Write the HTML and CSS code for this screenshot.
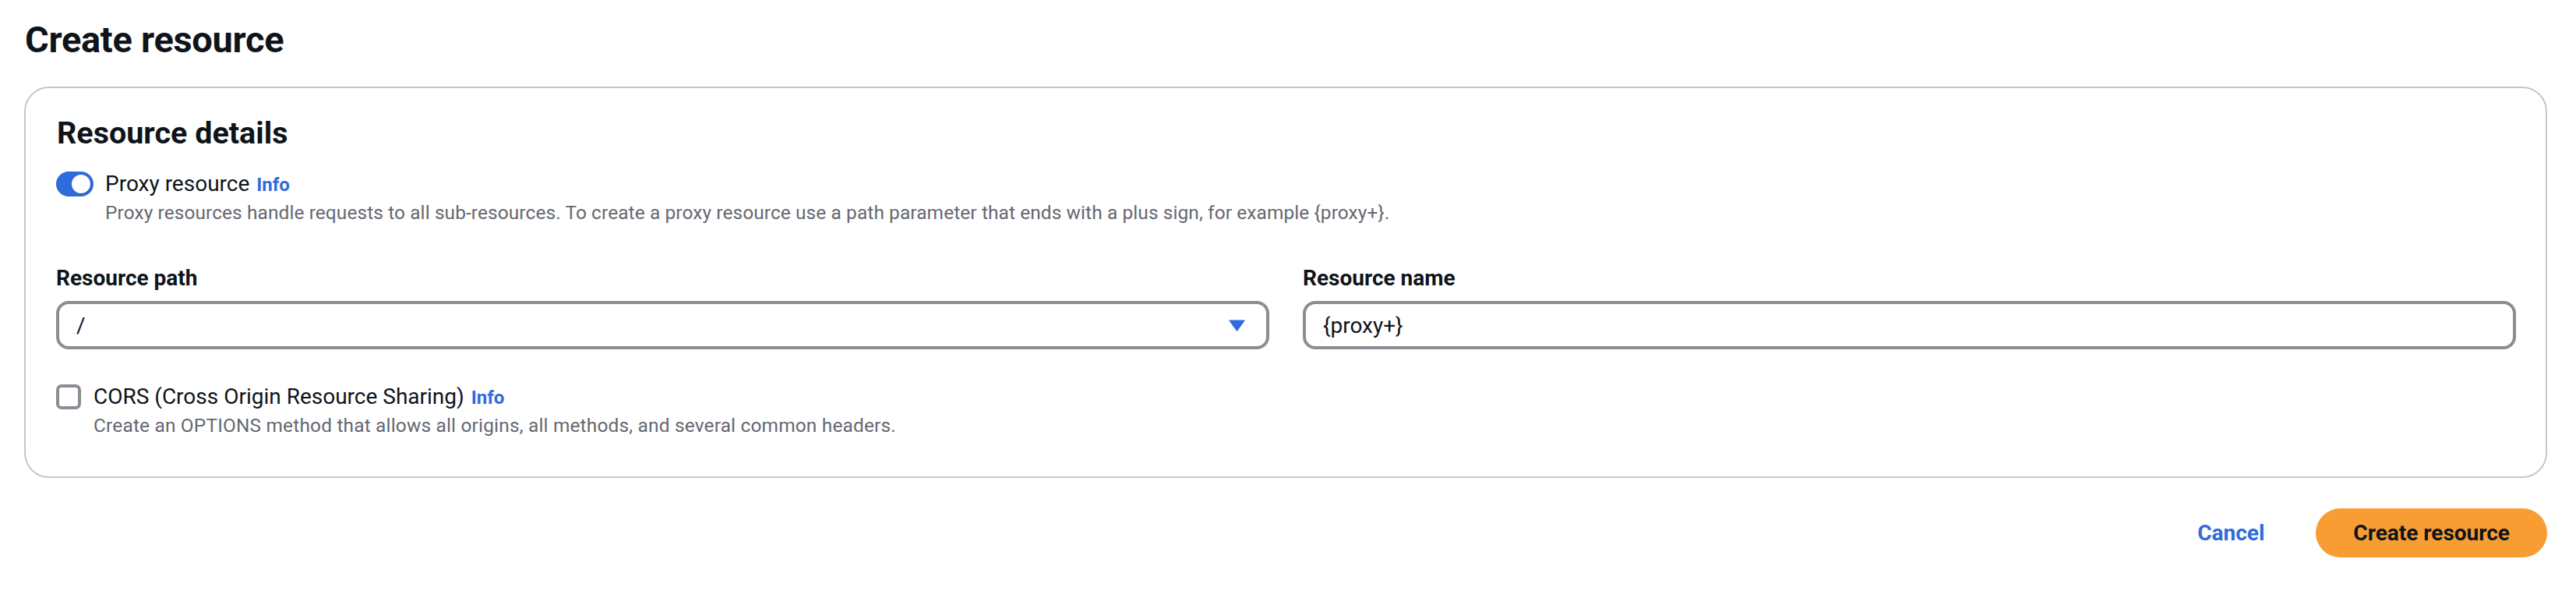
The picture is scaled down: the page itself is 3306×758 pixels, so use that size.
FILE: index.html
```html
<!DOCTYPE html>
<html lang="en">
<head>
<meta charset="utf-8">
<title>Create resource</title>
<link rel="stylesheet" href="styles.css">
</head>
<body>
<main class="page">
  <h1 class="page-title">Create resource</h1>

  <section class="card">
    <h2 class="card-title">Resource details</h2>

    <div class="option">
      <div class="option-row">
        <span class="toggle"><span class="toggle-knob"></span></span>
        <span class="option-label">Proxy resource <a class="info" href="#">Info</a></span>
      </div>
      <p class="option-desc toggle-desc">Proxy resources handle requests to all sub-resources. To create a proxy resource use a path parameter that ends with a plus sign, for example {proxy+}.</p>
    </div>

    <div class="fields">
      <div class="field">
        <label class="field-label">Resource path</label>
        <div class="input select">
          <span class="input-value">/</span>
          <svg class="caret" width="21" height="15" viewBox="0 0 21 15"><path d="M1 0.5 H20 Q21 0.5 20.4 1.6 L11.4 14 Q10.5 15 9.6 14 L0.6 1.6 Q0 0.5 1 0.5 Z" fill="#2f6bdb"/></svg>
        </div>
      </div>
      <div class="field">
        <label class="field-label">Resource name</label>
        <div class="input">
          <span class="input-value">{proxy+}</span>
        </div>
      </div>
    </div>

    <div class="option cors">
      <div class="option-row">
        <span class="checkbox"></span>
        <span class="option-label">CORS (Cross Origin Resource Sharing) <a class="info" href="#">Info</a></span>
      </div>
      <p class="option-desc check-desc">Create an OPTIONS method that allows all origins, all methods, and several common headers.</p>
    </div>
  </section>

  <div class="actions">
    <a class="btn-link" href="#">Cancel</a>
    <button class="btn-primary" type="button">Create resource</button>
  </div>
</main>
</body>
</html>
```

FILE: styles.css
```css
* { box-sizing: border-box; }

html, body {
  margin: 0;
  padding: 0;
  background: #ffffff;
}

body {
  font-family: Roboto, "Liberation Sans", Arial, sans-serif;
  color: #0f141a;
}

.page {
  padding: 23px 37px 0 31px;
}

.page-title {
  margin: 0 0 32px 1px;
  font-size: 47px;
  line-height: 56px;
  font-weight: 700;
  letter-spacing: -0.3px;
}

.card {
  border: 2px solid #c6c6cd;
  border-radius: 32px;
  padding: 34px 38px 51px 39px;
}

.card-title {
  margin: 0 0 25px 1px;
  font-size: 39.5px;
  line-height: 48px;
  font-weight: 700;
}

.option-row {
  display: flex;
  align-items: flex-start;
}

.toggle {
  position: relative;
  width: 48px;
  height: 32px;
  border-radius: 16px;
  background: #2f6bdb;
  flex: none;
  margin-right: 15px;
}

.toggle-knob {
  position: absolute;
  top: 4px;
  right: 4px;
  width: 24px;
  height: 24px;
  border-radius: 50%;
  background: #ffffff;
  box-shadow: 1px 1px 1px rgba(10, 40, 120, 0.35);
}

.checkbox {
  width: 32px;
  height: 32px;
  border: 4px solid #8c8c94;
  border-radius: 7px;
  background: #fff;
  flex: none;
  margin-right: 16px;
}

.option-label {
  font-size: 28px;
  line-height: 32px;
  color: #0f141a;
}

.info {
  font-size: 24px;
  font-weight: 700;
  color: #2f6bdb;
  text-decoration: none;
  margin-left: 2px;
}

.option-desc {
  margin: 6px 0 0;
  font-size: 24.4px;
  line-height: 28px;
  letter-spacing: 0.12px;
  color: #656871;
}

.toggle-desc { padding-left: 63px; }
.check-desc { padding-left: 48px; letter-spacing: 0.2px; }

.fields {
  display: grid;
  grid-template-columns: 1fr 1fr;
  column-gap: 43px;
  margin-top: 54px;
}

.field-label {
  display: block;
  font-size: 28px;
  line-height: 32px;
  font-weight: 700;
  margin-bottom: 13px;
}

.input {
  display: flex;
  align-items: center;
  height: 62px;
  border: 4px solid #8c8c94;
  border-radius: 16px;
  padding: 0 27px 0 22px;
  background: #fff;
}

.input-value {
  flex: 1;
  font-size: 28px;
  color: #0f141a;
}

.caret { flex: none; }

.cors { margin-top: 45px; }

.actions {
  display: flex;
  justify-content: flex-end;
  align-items: center;
  margin-top: 39px;
}

.btn-link {
  font-size: 28px;
  font-weight: 700;
  color: #2f6bdb;
  text-decoration: none;
  margin-right: 66px;
}

.btn-primary {
  height: 63px;
  padding: 0 48px;
  border: none;
  border-radius: 32px;
  background: #f89d33;
  color: #0f141a;
  font-family: inherit;
  font-size: 28px;
  font-weight: 700;
}
```
